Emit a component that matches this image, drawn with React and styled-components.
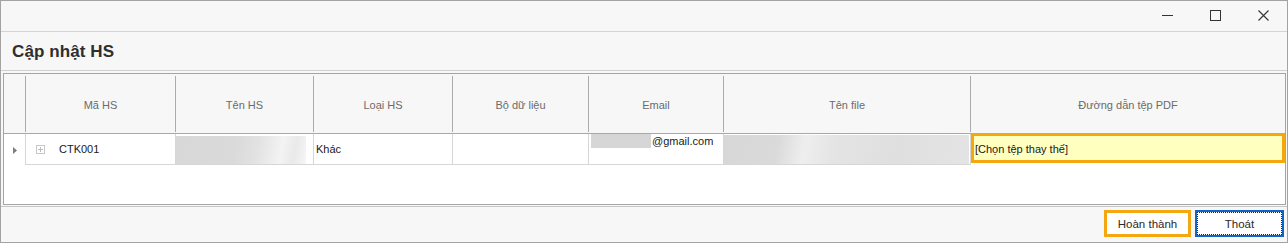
import React from "react";
import styled, { createGlobalStyle } from "styled-components";

const GlobalStyle = createGlobalStyle`
    html, body {
        margin: 0;
        padding: 0;
        background: #ffffff;
    }
    * {
        box-sizing: border-box;
    }
`

const COLUMNS = "22px 150px 138px 139px 136px 135px 247px 1fr";

const Window = styled.div`
    width: 1288px;
    height: 243px;
    border: 1px solid #a3a3a3;
    background: #f7f7f7;
    display: flex;
    flex-direction: column;
    font-family: "Liberation Sans", Arial, sans-serif;
    font-size: 11px;
    color: #202020;
`

const TitleBar = styled.div`
    height: 31px;
    flex-shrink: 0;
    border-bottom: 1px solid #d4d4d4;
    display: flex;
    justify-content: flex-end;
    align-items: stretch;
`

const ControlButton = styled.div`
    width: 48px;
    display: flex;
    align-items: center;
    justify-content: center;
    padding-bottom: 1px;
`

const Caption = styled.div`
    height: 39px;
    flex-shrink: 0;
    border-bottom: 1px solid #d0d0d0;
    display: flex;
    align-items: center;
    padding-left: 11px;
    padding-top: 2px;
`

const Title = styled.h1`
    margin: 0;
    font-size: 17px;
    font-weight: 700;
    color: #2e2e2e;
    letter-spacing: 0.1px;
`

const GridPanel = styled.div`
    height: 132px;
    flex-shrink: 0;
    margin: 2px 1px 0 2px;
    border: 1px solid #a5a5a5;
    background: #ffffff;
    display: flex;
    flex-direction: column;
`

const HeaderRow = styled.div`
    display: grid;
    grid-template-columns: ${COLUMNS};
    height: 60px;
    background: #f7f7f7;
    border-bottom: 1px solid #a8a8a8;
`

const HeaderCell = styled.div`
    margin: 2px 0 1px;
    border-right: ${p => (p.$last ? "none" : "1px solid #ababab")};
    display: flex;
    align-items: center;
    justify-content: center;
    color: #6b6b6b;
    padding-top: 1px;
`

const DataRow = styled.div`
    display: grid;
    grid-template-columns: ${COLUMNS};
    height: 31px;
`

const Cell = styled.div`
    border-right: 1px solid #d6d6d6;
    border-bottom: 1px solid #d6d6d6;
    display: flex;
    align-items: ${p => (p.$top ? "flex-start" : "center")};
    padding-left: ${p => p.$pad || 0}px;
    overflow: hidden;
    white-space: nowrap;
`

const IndicatorCell = styled.div`
    border-right: 1px solid #d6d6d6;
    display: flex;
    align-items: center;
    justify-content: center;
    padding-top: 1px;
`

const CodeText = styled.span`
    margin-left: 14px;
`

const Blurred = styled.div`
    align-self: stretch;
    margin: ${p => p.$mt}px ${p => p.$mr}px 0 0;
    flex: 1;
    background: ${p => p.$bg};
    filter: blur(0.6px);
`

const MaskedBox = styled.div`
    width: 60px;
    height: 14px;
    margin-right: 1px;
    background: #d6d6d6;
`

const EmailText = styled.span`
    padding-top: 1px;
`

const PathCell = styled.div`
    border: 3px solid #f5a70f;
    background: #ffffc0;
    display: flex;
    align-items: center;
    padding-left: 1px;
    padding-top: 1px;
    margin-top: -1px;
    height: 30px;
`

const Footer = styled.div`
    flex: 1;
    margin-top: 1px;
    border-top: 1px solid #c6c6c6;
    display: flex;
    justify-content: flex-end;
    align-items: flex-start;
    gap: 4px;
    padding: 3px 3px 0 0;
`

const Button = styled.div`
    width: ${p => p.$w}px;
    height: 27px;
    background: #ffffff;
    border: ${p => (p.$primary ? "2px solid #0f64c6" : "3px solid #f5a70f")};
    display: flex;
    align-items: center;
    justify-content: center;
    color: #2a2a2a;
    font-size: 11.5px;
`

const FocusRing = styled.div`
    flex: 1;
    align-self: stretch;
    border: 1px dotted #222;
    display: flex;
    align-items: center;
    justify-content: center;
`

const headers = ["", "Mã HS", "Tên HS", "Loại HS", "Bộ dữ liệu", "Email", "Tên file", "Đường dẫn tệp PDF"];

const App = () => {
    return (
        <>
            <GlobalStyle />
            <Window>
                <TitleBar>
                    <ControlButton>
                        <svg width="11" height="11" viewBox="0 0 11 11">
                            <line x1="0" y1="5.5" x2="11" y2="5.5" stroke="#333" strokeWidth="1" />
                        </svg>
                    </ControlButton>
                    <ControlButton>
                        <svg width="11" height="11" viewBox="0 0 11 11">
                            <rect x="0.5" y="0.5" width="10" height="10" fill="none" stroke="#333" strokeWidth="1" />
                        </svg>
                    </ControlButton>
                    <ControlButton>
                        <svg width="11" height="11" viewBox="0 0 11 11">
                            <path d="M0.5 0.5 L10.5 10.5 M10.5 0.5 L0.5 10.5" stroke="#333" strokeWidth="1.1" />
                        </svg>
                    </ControlButton>
                </TitleBar>

                <Caption>
                    <Title>Cập nhật HS</Title>
                </Caption>

                <GridPanel>
                    <HeaderRow>
                        {headers.map((h, i) => (
                            <HeaderCell key={i} $last={i === headers.length - 1}>{h}</HeaderCell>
                        ))}
                    </HeaderRow>
                    <DataRow>
                        <IndicatorCell>
                            <svg width="4" height="7" viewBox="0 0 4 7">
                                <path d="M0 0 L4 3.5 L0 7 Z" fill="#7c7c7c" />
                            </svg>
                        </IndicatorCell>
                        <Cell $pad={10}>
                            <svg width="9" height="9" viewBox="0 0 9 9">
                                <rect x="0.5" y="0.5" width="8" height="8" fill="#fff" stroke="#c8c8c8" />
                                <path d="M2 4.5 H7 M4.5 2 V7" stroke="#bdbdbd" />
                            </svg>
                            <CodeText>CTK001</CodeText>
                        </Cell>
                        <Cell>
                            <Blurred
                                $mt={2}
                                $mr={7}
                                $bg="linear-gradient(100deg, #d8d8d8 0%, #dadada 45%, #e2e2e2 62%, #f3f3f3 80%, #e9e9e9 90%, #f6f6f6 100%)"
                            />
                        </Cell>
                        <Cell $pad={2}>Khác</Cell>
                        <Cell />
                        <Cell $pad={2} $top>
                            <MaskedBox />
                            <EmailText>@gmail.com</EmailText>
                        </Cell>
                        <Cell>
                            <Blurred
                                $mt={1}
                                $mr={1}
                                $bg="linear-gradient(100deg, #d7d7d7 0%, #dadada 22%, #eeeeee 33%, #e4e4e4 45%, #dfdfdf 70%, #e4e4e4 100%)"
                            />
                        </Cell>
                        <PathCell>[Chọn tệp thay thế]</PathCell>
                    </DataRow>
                </GridPanel>

                <Footer>
                    <Button $w={87}>Hoàn thành</Button>
                    <Button $w={89} $primary>
                        <FocusRing>Thoát</FocusRing>
                    </Button>
                </Footer>
            </Window>
        </>
    )
}

export default App;
